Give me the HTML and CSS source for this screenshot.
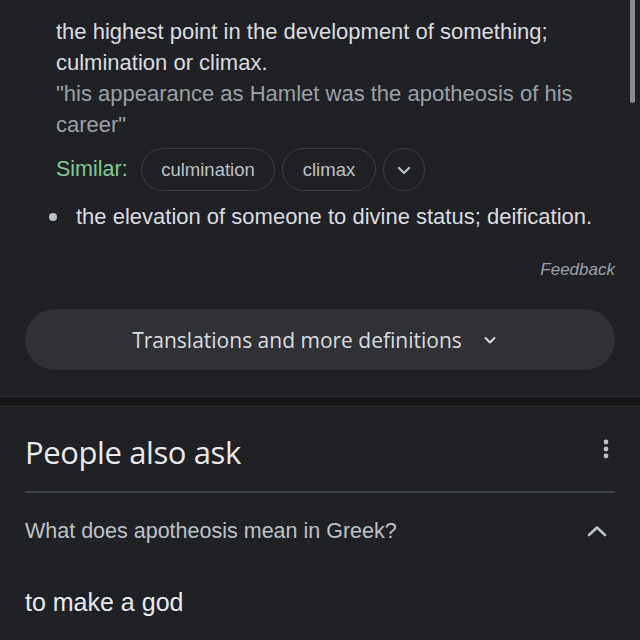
FILE: index.html
```html
<!DOCTYPE html>
<html>
<head>
<meta charset="utf-8">
<link rel="stylesheet" href="styles.css">
</head>
<body>
<div class="page">
  <section class="dict">
    <div class="sense">
      <p class="def">the highest point in the development of something; culmination or climax.</p>
      <p class="example">"his appearance as Hamlet was the apotheosis of his career"</p>
      <div class="similar">
        <span class="sim-label">Similar:</span>
        <span class="chip">culmination</span>
        <span class="chip">climax</span>
        <span class="chip chip-round">
          <svg width="18" height="18" viewBox="0 0 18 18"><path d="M4 7 L9 12 L14 7" fill="none" stroke="#bdc1c6" stroke-width="2.2" stroke-linecap="round" stroke-linejoin="round"/></svg>
        </span>
      </div>
    </div>
    <ul class="bullets">
      <li>the elevation of someone to divine status; deification.</li>
    </ul>
    <div class="feedback">Feedback</div>
    <div class="more-btn">
      <span>Translations and more definitions</span>
      <svg width="16" height="16" viewBox="0 0 16 16"><path d="M3.5 6 L8 10.5 L12.5 6" fill="none" stroke="#dadce0" stroke-width="2" stroke-linecap="round" stroke-linejoin="round"/></svg>
    </div>
  </section>
  <div class="band"></div>
  <section class="paa">
    <div class="paa-head">
      <h2>People also ask</h2>
      <svg width="6" height="20" viewBox="0 0 6 20"><circle cx="3" cy="3" r="2.4" fill="#bdc1c6"/><circle cx="3" cy="10" r="2.4" fill="#bdc1c6"/><circle cx="3" cy="17" r="2.4" fill="#bdc1c6"/></svg>
    </div>
    <div class="q-row">
      <span class="q">What does apotheosis mean in Greek?</span>
      <svg width="22" height="14" viewBox="0 0 22 14"><path d="M3 11 L11 3.5 L19 11" fill="none" stroke="#bdc1c6" stroke-width="2.6" stroke-linecap="round" stroke-linejoin="round"/></svg>
    </div>
    <div class="answer">to make a god</div>
  </section>
  <div class="scrollbar"></div>
</div>
</body>
</html>
```
FILE: styles.css
```css
* { box-sizing: border-box; }
html, body { margin: 0; padding: 0; }
body {
  background: #202124;
  font-family: "Liberation Sans", Arial, sans-serif;
  color: #dadce0;
}
.page {
  position: relative;
  width: 640px;
  height: 640px;
  overflow: hidden;
}
.dict {
  padding: 16px 25px 0 25px;
}
.sense {
  padding-left: 31px;
}
.def, .example {
  margin: 0;
  font-size: 22px;
  line-height: 31px;
  padding-right: 20px;
}
.def { color: #dadce0; }
.example { color: #9aa0a6; }
.similar {
  display: flex;
  align-items: center;
  gap: 7px;
  margin-top: 8px;
}
.sim-label {
  color: #81c995;
  font-size: 21.5px;
  margin-right: 6px;
}
.chip {
  height: 43px;
  border: 1px solid #3c4043;
  border-radius: 22px;
  padding: 0 19.5px;
  display: flex;
  align-items: center;
  font-size: 18.5px;
  color: #bdc1c6;
}
.chip-round {
  width: 42px;
  padding: 0;
  justify-content: center;
}
.bullets {
  margin: 10px 0 0 0;
  padding: 0 0 0 51px;
  font-size: 22px;
  line-height: 31px;
  color: #dadce0;
  list-style: none;
}
.bullets li { position: relative; }
.bullets li::before {
  content: "";
  position: absolute;
  left: -27px;
  top: 12px;
  width: 8px;
  height: 8px;
  border-radius: 50%;
  background: #bdc1c6;
}
.feedback {
  margin-top: 29px;
  text-align: right;
  font-style: italic;
  font-size: 17px;
  line-height: 18px;
  color: #9aa0a6;
}
.more-btn {
  margin-top: 30px;
  height: 61px;
  border-radius: 31px;
  background: #303134;
  display: flex;
  align-items: center;
  justify-content: center;
  gap: 20px;
  padding-right: 10px;
  font-family: "Open Sans", "Liberation Sans", sans-serif;
  font-size: 21px;
  color: #dadce0;
}
.band {
  margin-top: 26px;
  height: 11px;
  background: #171717;
  border-top: 1px solid #2a2b2e;
  border-bottom: 1px solid #2a2b2e;
}
.paa {
  padding: 0 25px;
}
.paa-head {
  display: flex;
  justify-content: space-between;
  align-items: center;
  height: 86px;
  border-bottom: 2px solid #3c4043;
  padding-top: 6px;
  padding-right: 6px;
}
.paa-head h2 {
  margin: 0;
  font-family: "Open Sans", "Liberation Sans", sans-serif;
  font-weight: 500;
  font-size: 31px;
  color: #e8eaed;
  letter-spacing: -0.4px;
}
.paa-head svg { margin-top: -6px; }
.q-row {
  display: flex;
  justify-content: space-between;
  align-items: center;
  height: 76px;
  padding-right: 7px;
}
.q {
  font-size: 21.5px;
  color: #bdc1c6;
}
.answer {
  margin-top: 19px;
  font-size: 25px;
  color: #e8eaed;
}
.scrollbar {
  position: absolute;
  top: 0;
  right: 5px;
  width: 5px;
  height: 103px;
  border-radius: 0 0 3px 3px;
  background: #8a8b8d;
}
```
